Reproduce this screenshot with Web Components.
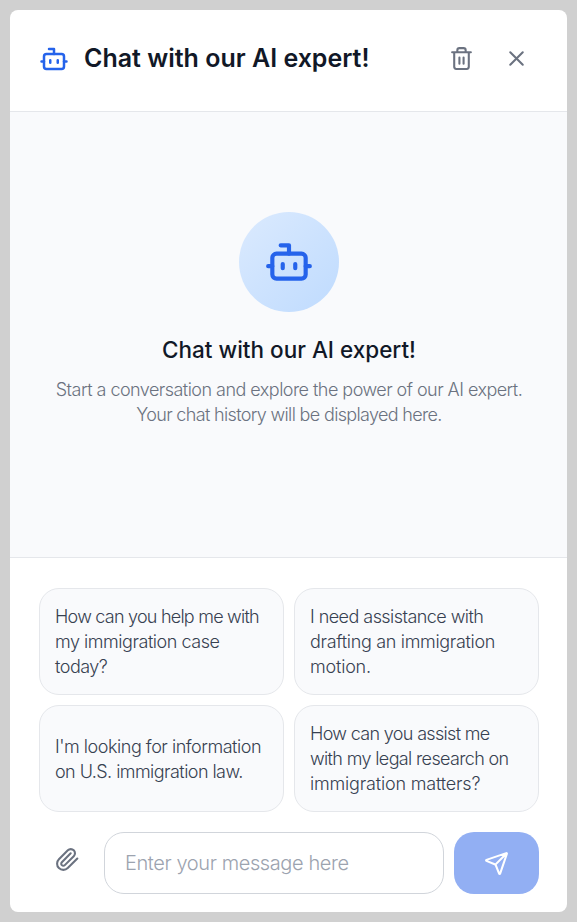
<!DOCTYPE html>
<html lang="en">
<head>
<meta charset="utf-8">
<title>Chat with our AI expert!</title>
<style>
  body {
    margin: 0;
    padding: 10px;
    box-sizing: border-box;
    height: 922px;
    background: #d0d0d0;
    font-family: Inter, "Liberation Sans", sans-serif;
  }
</style>
</head>
<body>
<chat-panel>
  <chat-header slot="header">Chat with our AI expert!</chat-header>
  <chat-empty>
    <span slot="title">Chat with our AI expert!</span>
    <text-line style="--track: -0.535px">Start a conversation and explore the power of our AI expert.</text-line>
    <text-line style="--track: -0.66px">Your chat history will be displayed here.</text-line>
  </chat-empty>
  <chat-suggestion slot="suggestion">
    <text-line style="--track: -0.77px">How can you help me with</text-line>
    <text-line style="--track: -0.46px">my immigration case</text-line>
    <text-line style="--track: -0.5px">today?</text-line>
  </chat-suggestion>
  <chat-suggestion slot="suggestion">
    <text-line style="--track: -0.55px">I need assistance with</text-line>
    <text-line style="--track: -0.32px">drafting an immigration</text-line>
    <text-line style="--track: -0.2px">motion.</text-line>
  </chat-suggestion>
  <chat-suggestion slot="suggestion">
    <text-line style="--track: -0.47px">I'm looking for information</text-line>
    <text-line style="--track: -0.55px">on U.S. immigration law.</text-line>
  </chat-suggestion>
  <chat-suggestion slot="suggestion">
    <text-line style="--track: -0.67px">How can you assist me</text-line>
    <text-line style="--track: -0.64px">with my legal research on</text-line>
    <text-line style="--track: -0.18px">immigration matters?</text-line>
  </chat-suggestion>
  <chat-composer slot="composer">Enter your message here</chat-composer>
</chat-panel>

<script>
const ICONS = {
  bot: `<path d="M12 8V4H8"/><rect width="16" height="12" x="4" y="8" rx="2"/><path d="M2 14h2M20 14h2M15 13v2M9 13v2"/>`,
  trash: `<path d="M3 6h18M19 6v14a2 2 0 0 1-2 2H7a2 2 0 0 1-2-2V6M8 6V4a2 2 0 0 1 2-2h4a2 2 0 0 1 2 2v2M10 11v6M14 11v6"/>`,
  close: `<path d="M18 6 6 18M6 6l12 12"/>`,
  clip: `<path d="m21.44 11.05-9.19 9.19a6 6 0 0 1-8.49-8.49l8.57-8.57A4 4 0 1 1 18 8.84l-8.59 8.57a2 2 0 0 1-2.83-2.83l8.49-8.48"/>`,
  send: `<path d="M14.536 21.686a.5.5 0 0 0 .937-.024l6.5-19a.496.496 0 0 0-.635-.635l-19 6.5a.5.5 0 0 0-.024.937l7.93 3.18a2 2 0 0 1 1.112 1.11zM21.854 2.147l-10.94 10.939"/>`,
};

function define(name, css, html) {
  customElements.define(name, class extends HTMLElement {
    constructor() {
      super();
      this.attachShadow({ mode: "open" });
      this.shadowRoot.innerHTML = `<style>${css}</style>${html}`;
    }
  });
}

class ChatIcon extends HTMLElement {
  constructor() {
    super();
    this.attachShadow({ mode: "open" });
  }

  connectedCallback() {
    const size = this.getAttribute("size") || 25;
    this.shadowRoot.innerHTML = `
    <style>:host { display: block; flex: none; } svg { display: block; }</style>
    <svg width="${size}" height="${size}" viewBox="0 0 24 24" fill="none" stroke="currentColor"
      stroke-width="2" stroke-linecap="round" stroke-linejoin="round">${ICONS[this.getAttribute("name")]}</svg>`;
  }
}
customElements.define("chat-icon", ChatIcon);

// One line of copy; --track tunes its letter spacing.
define("text-line", `
  :host { display: block; white-space: nowrap; letter-spacing: var(--track, -0.6px); }
`, `<slot></slot>`);

define("chat-panel", `
  :host {
    display: flex; flex-direction: column; box-sizing: border-box;
    width: 557px; height: 902px; background: #fff; border-radius: 8px; overflow: hidden;
  }
  main { flex: 1; display: grid; background: #f9fafc; }
  footer { border-top: 1px solid #e5e7eb; padding: 30px 28px 18px 29px; }
  .grid { display: grid; grid-template-columns: 245px 245px; grid-auto-rows: 107px; gap: 10px; margin-bottom: 20px; }
`, `
  <slot name="header"></slot>
  <main><slot></slot></main>
  <footer>
    <div class="grid"><slot name="suggestion"></slot></div>
    <slot name="composer"></slot>
  </footer>
`);

define("chat-header", `
  :host {
    display: flex; align-items: center; box-sizing: border-box; height: 102px; flex: none;
    padding: 0 28px 4px 29px; border-bottom: 1px solid #e5e7eb;
  }
  .logo { color: #2563eb; margin-right: 15px; }
  h1 { margin: 0; flex: 1; font-size: 25px; font-weight: 600; line-height: 35px; color: #111827; white-space: nowrap; }
  button { display: grid; place-items: center; width: 45px; height: 45px; margin: 0 0 0 10px; padding: 0; border: 0; background: none; color: #6b7280; }
`, `
  <chat-icon class="logo" name="bot" size="30"></chat-icon>
  <h1><slot></slot></h1>
  <button aria-label="Clear"><chat-icon name="trash"></chat-icon></button>
  <button aria-label="Close"><chat-icon name="close"></chat-icon></button>
`);

define("chat-empty", `
  :host { display: flex; flex-direction: column; align-items: center; padding: 100px 0 0 1px; text-align: center; }
  .badge {
    display: grid; place-items: center; width: 100px; height: 100px; border-radius: 50%;
    background: linear-gradient(135deg, #dbeafe, #bfdbfe); color: #2563eb;
  }
  h2 { margin: 20px 0 10px; font-size: 22.5px; font-weight: 500; line-height: 35px; color: #111827; white-space: nowrap; }
  .text { font-size: 18px; font-weight: 300; line-height: 25px; color: #6b7280; }
`, `
  <div class="badge"><chat-icon name="bot" size="50"></chat-icon></div>
  <h2><slot name="title"></slot></h2>
  <div class="text"><slot></slot></div>
`);

define("chat-suggestion", `
  :host {
    display: flex; flex-direction: column; justify-content: center; box-sizing: border-box;
    padding: 0 15px; border: 1px solid #e5e7eb; border-radius: 20px; background: #f9fafc;
    font-size: 18px; font-weight: 300; line-height: 25px; color: #374151;
  }
`, `<slot></slot>`);

define("chat-composer", `
  :host { display: flex; align-items: center; gap: 10px; height: 62px; }
  button { display: grid; place-items: center; box-sizing: border-box; padding: 0; border: 0; margin: 0; }
  .attach { width: 55px; height: 55px; margin-bottom: 7px; padding-left: 1px; background: none; color: #6b7280; }
  .field {
    flex: 1; box-sizing: border-box; height: 62px; padding: 0 20px; border: 1px solid #d1d5db; border-radius: 20px;
    font-size: 20px; font-weight: 300; line-height: 60px; letter-spacing: -0.4px; color: #9ca3af; white-space: nowrap;
  }
  .send { width: 85px; height: 62px; border-radius: 20px; background: #92aff3; color: #fff; }
`, `
  <button class="attach" aria-label="Attach"><chat-icon name="clip"></chat-icon></button>
  <div class="field"><slot></slot></div>
  <button class="send" aria-label="Send"><chat-icon name="send"></chat-icon></button>
`);
</script>
</body>
</html>
